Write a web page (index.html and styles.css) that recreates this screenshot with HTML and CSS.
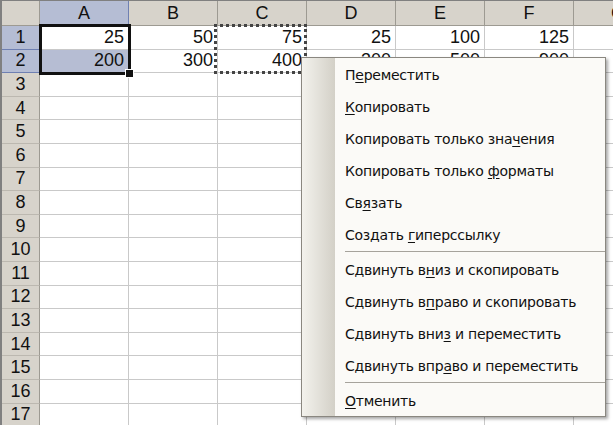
FILE: index.html
```html
<!DOCTYPE html>
<html lang="ru">
<head>
    <meta charset="UTF-8">
    <meta name="viewport" content="width=device-width, initial-scale=1.0">
    <link rel="stylesheet" href="styles.css">
    <title>Лист1</title>
</head>
<body>
    <div class="sheet">
        <div class="corner"></div>
        <div class="colHead sel">A</div><div class="colHead">B</div><div class="colHead">C</div><div class="colHead">D</div><div class="colHead">E</div><div class="colHead">F</div><div class="colHead">G</div>

        <div class="rowHead sel">1</div>
        <div class="cell">25</div><div class="cell">50</div><div class="cell">75</div><div class="cell">25</div><div class="cell">100</div><div class="cell">125</div><div class="cell"></div>
        <div class="rowHead sel">2</div>
        <div class="cell picked">200</div><div class="cell">300</div><div class="cell">400</div><div class="cell">300</div><div class="cell">500</div><div class="cell">900</div><div class="cell"></div>

        <div class="rowHead">3</div><div class="cell"></div><div class="cell"></div><div class="cell"></div><div class="cell"></div><div class="cell"></div><div class="cell"></div><div class="cell"></div>
        <div class="rowHead">4</div><div class="cell"></div><div class="cell"></div><div class="cell"></div><div class="cell"></div><div class="cell"></div><div class="cell"></div><div class="cell"></div>
        <div class="rowHead">5</div><div class="cell"></div><div class="cell"></div><div class="cell"></div><div class="cell"></div><div class="cell"></div><div class="cell"></div><div class="cell"></div>
        <div class="rowHead">6</div><div class="cell"></div><div class="cell"></div><div class="cell"></div><div class="cell"></div><div class="cell"></div><div class="cell"></div><div class="cell"></div>
        <div class="rowHead">7</div><div class="cell"></div><div class="cell"></div><div class="cell"></div><div class="cell"></div><div class="cell"></div><div class="cell"></div><div class="cell"></div>
        <div class="rowHead">8</div><div class="cell"></div><div class="cell"></div><div class="cell"></div><div class="cell"></div><div class="cell"></div><div class="cell"></div><div class="cell"></div>
        <div class="rowHead">9</div><div class="cell"></div><div class="cell"></div><div class="cell"></div><div class="cell"></div><div class="cell"></div><div class="cell"></div><div class="cell"></div>
        <div class="rowHead">10</div><div class="cell"></div><div class="cell"></div><div class="cell"></div><div class="cell"></div><div class="cell"></div><div class="cell"></div><div class="cell"></div>
        <div class="rowHead">11</div><div class="cell"></div><div class="cell"></div><div class="cell"></div><div class="cell"></div><div class="cell"></div><div class="cell"></div><div class="cell"></div>
        <div class="rowHead">12</div><div class="cell"></div><div class="cell"></div><div class="cell"></div><div class="cell"></div><div class="cell"></div><div class="cell"></div><div class="cell"></div>
        <div class="rowHead">13</div><div class="cell"></div><div class="cell"></div><div class="cell"></div><div class="cell"></div><div class="cell"></div><div class="cell"></div><div class="cell"></div>
        <div class="rowHead">14</div><div class="cell"></div><div class="cell"></div><div class="cell"></div><div class="cell"></div><div class="cell"></div><div class="cell"></div><div class="cell"></div>
        <div class="rowHead">15</div><div class="cell"></div><div class="cell"></div><div class="cell"></div><div class="cell"></div><div class="cell"></div><div class="cell"></div><div class="cell"></div>
        <div class="rowHead">16</div><div class="cell"></div><div class="cell"></div><div class="cell"></div><div class="cell"></div><div class="cell"></div><div class="cell"></div><div class="cell"></div>
        <div class="rowHead">17</div><div class="cell"></div><div class="cell"></div><div class="cell"></div><div class="cell"></div><div class="cell"></div><div class="cell"></div><div class="cell"></div>

        <!-- selection A1:A2 and copy range C1:C2 -->
        <div class="selection"><span class="handle"></span></div>
        <div class="copyRange"></div>
    </div>

    <div class="menu">
        <div class="item">П<u>е</u>реместить</div>
        <div class="item"><u>К</u>опировать</div>
        <div class="item">Копировать только зна<u>ч</u>ения</div>
        <div class="item">Копировать только <u>ф</u>орматы</div>
        <div class="item">Св<u>я</u>зать</div>
        <div class="item">Создать <u>г</u>иперссылку</div>
        <div class="sep"></div>
        <div class="item">Сдвинуть в<u>н</u>из и скопировать</div>
        <div class="item">Сдвинуть в<u>п</u>раво и скопировать</div>
        <div class="item">Сдвинуть вни<u>з</u> и переместить</div>
        <div class="item">Сдвинуть впр<u>а</u>во и переместить</div>
        <div class="sep"></div>
        <div class="item"><u>О</u>тменить</div>
    </div>
</body>
</html>
```

FILE: styles.css
```css
body{
    margin: 0;
    width: 613px;
    height: 425px;
    overflow: hidden;
    position: relative;
    background-color: white;
    font-family: "Liberation Sans", Arial, sans-serif;
}

.sheet{
    position: relative;
    display: grid;
    grid-template-columns: 38px repeat(7, 89px);
    grid-template-rows: 25px repeat(17, 23.6px);
    border-top: 1px solid #808080;
    border-left: 2px solid #808080;
    box-sizing: border-box;
    font-size: 18px;
}

.corner, .colHead, .rowHead{
    background-color: #d7d3cb;
    display: flex;
    justify-content: center;
    align-items: center;
    color: #111;
    box-sizing: border-box;
}

.corner{
    border-right: 1px solid #9d9a92;
    border-bottom: 1px solid #9d9a92;
}

.colHead{
    border-right: 1px solid #9d9a92;
    border-bottom: 1px solid #9d9a92;
    padding-top: 1px;
}

.rowHead{
    border-right: 1px solid #9d9a92;
    border-bottom: 1px solid #bcb8b0;
}

.colHead.sel, .rowHead.sel{
    background-color: #b5bdd4;
    border-color: #6f80b2;
}

.rowHead.sel{
    border-right-color: #5a6aa0;
}

.cell{
    border-right: 1px solid #c9c9c9;
    border-bottom: 1px solid #c9c9c9;
    box-sizing: border-box;
    display: flex;
    justify-content: flex-end;
    align-items: center;
    padding-right: 4px;
    color: #111;
}

.cell.picked{
    background-color: #b6bdd3;
}

.selection{
    position: absolute;
    left: 37px;
    top: 23px;
    width: 92px;
    height: 51px;
    border: 3px solid #111;
    box-sizing: border-box;
}

.handle{
    position: absolute;
    right: -6px;
    bottom: -6px;
    width: 7px;
    height: 7px;
    background-color: #111;
    border: 1px solid white;
}

.copyRange{
    position: absolute;
    left: 212px;
    top: 23px;
    width: 93px;
    height: 50px;
    border: 3px dotted #444;
    box-sizing: border-box;
}

.menu{
    position: absolute;
    left: 301px;
    top: 57px;
    width: 305px;
    height: 360px;
    box-sizing: border-box;
    border: 1px solid #8a8780;
    box-shadow: 2px 2px 3px rgba(0, 0, 0, 0.35);
    background: linear-gradient(to right, #f3f2ed 0px, #d3d0c7 33px, #fbfaf7 33px);
    padding: 1px 0 0 0;
    font-family: "DejaVu Sans", Tahoma, sans-serif;
    font-size: 14px;
    letter-spacing: -0.25px;
    color: #111;
}

.item{
    height: 32px;
    line-height: 32px;
    padding-left: 43px;
    white-space: nowrap;
}

.item u{
    text-underline-offset: 2px;
}

.sep{
    height: 3px;
    margin-left: 43px;
    border-top: 1px solid #a6a39c;
    box-sizing: border-box;
}
```
